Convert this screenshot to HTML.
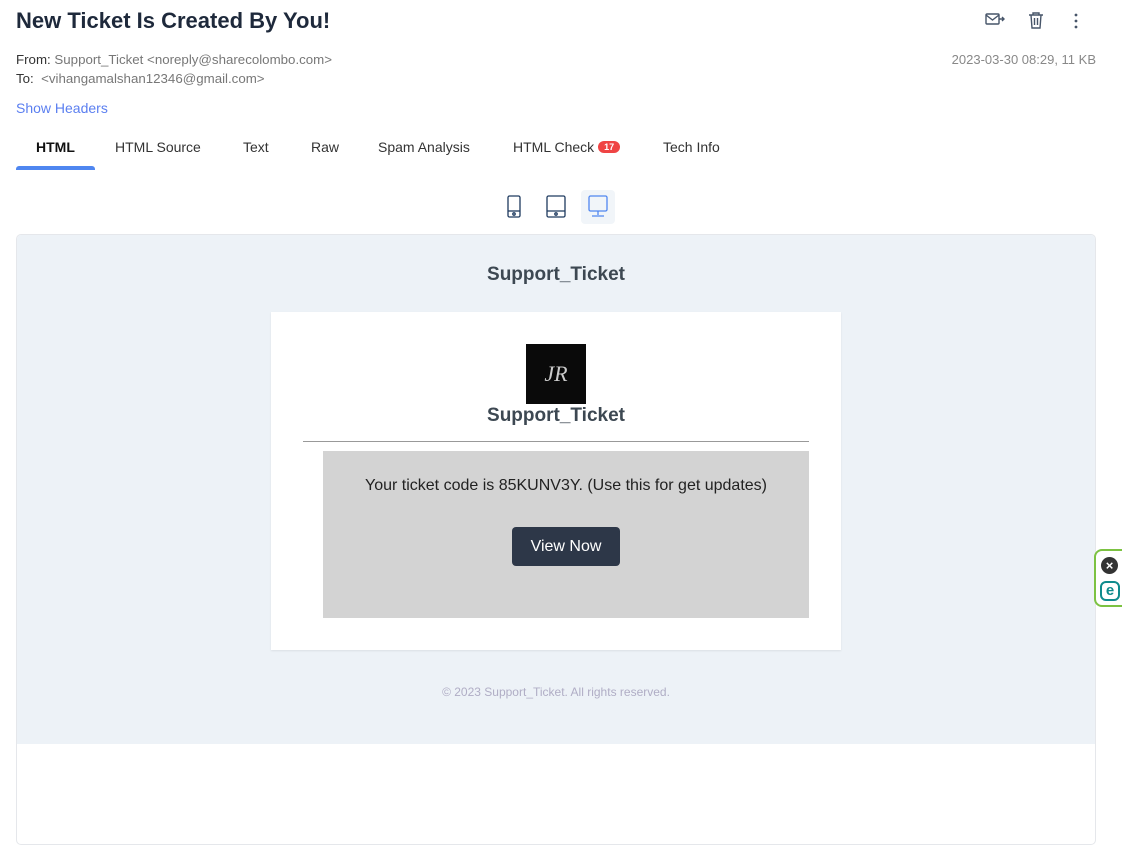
<!DOCTYPE html>
<html><head><meta charset="utf-8"><style>
*{box-sizing:border-box;margin:0;padding:0}
body{width:1122px;height:855px;background:#fff;font-family:"Liberation Sans",sans-serif;position:relative;overflow:hidden;color:#1f2937}
.abs{position:absolute}
h1{position:absolute;left:16px;top:8px;font-size:22px;font-weight:bold;color:#1e293b}
.meta{font-size:13.3px;color:#333}
.meta span{color:#777}
.tab{position:absolute;top:139px;font-size:14px;color:#333}
.hd{font-size:19px;font-weight:bold;color:#3d4852;font-family:"Liberation Sans",sans-serif}
</style></head><body>
<h1>New Ticket Is Created By You!</h1>
<div class="abs meta" style="left:16px;top:52px">From: <span>Support_Ticket &lt;noreply@sharecolombo.com&gt;</span></div>
<div class="abs meta" style="left:16px;top:71px">To:&nbsp; <span>&lt;vihangamalshan12346@gmail.com&gt;</span></div>
<div class="abs" style="right:26px;top:52px;font-size:13px;color:#888">2023-03-30 08:29, 11 KB</div>
<svg class="abs" style="left:985px;top:12px" width="20" height="16" viewBox="0 0 20 16" fill="none" stroke="#475569" stroke-width="1.4"><rect x="1" y="2" width="13" height="10" rx="1"/><path d="M1 3l6.5 5 6.5-5M14 7h5M17 5l2 2-2 2"/></svg>
<svg class="abs" style="left:1028px;top:11px" width="16" height="18" viewBox="0 0 16 18" fill="none" stroke="#475569" stroke-width="1.4"><path d="M1 4h14M5 4V2h6v2M3 4l1 13h8l1-13M6.5 7v7M9.5 7v7"/></svg>
<svg class="abs" style="left:1073px;top:13px" width="6" height="16"><circle cx="3" cy="2" r="1.4" fill="#475569"/><circle cx="3" cy="8" r="1.4" fill="#475569"/><circle cx="3" cy="14" r="1.4" fill="#475569"/></svg>
<div class="abs" style="left:16px;top:100px;font-size:14px;color:#5b7ff0">Show Headers</div>
<div class="tab" style="left:36px;font-weight:bold;color:#111">HTML</div>
<div class="abs" style="left:16px;top:166px;width:79px;height:4px;background:#4f86f0;border-radius:3px 3px 0 0"></div>
<div class="tab" style="left:115px">HTML Source</div>
<div class="tab" style="left:243px">Text</div>
<div class="tab" style="left:311px">Raw</div>
<div class="tab" style="left:378px">Spam Analysis</div>
<div class="tab" style="left:513px">HTML Check <span style="display:inline-block;background:#ef4444;color:#fff;font-size:9px;font-weight:bold;border-radius:7px;padding:1px 6px;vertical-align:2px">17</span></div>
<div class="tab" style="left:663px">Tech Info</div>
<svg class="abs" style="left:507px;top:195px" width="14" height="24" fill="none" stroke="#1e3a5f" stroke-width="1.3"><rect x="1" y="1" width="12" height="21" rx="1.5"/><path d="M1 16h12"/><circle cx="7" cy="19" r="1.2"/></svg>
<svg class="abs" style="left:546px;top:195px" width="20" height="24" fill="none" stroke="#1e3a5f" stroke-width="1.3"><rect x="1" y="1" width="18" height="21" rx="1.5"/><path d="M1 16h18"/><circle cx="10" cy="19" r="1.2"/></svg>
<div class="abs" style="left:581px;top:190px;width:34px;height:34px;background:#f1f5f9;border-radius:4px"></div>
<svg class="abs" style="left:587px;top:195px" width="22" height="24" fill="none" stroke="#4f86f0" stroke-width="1.3"><rect x="2" y="1" width="18" height="15" rx="1.5"/><path d="M11 16v4M5 21h12"/></svg>
<div class="abs" style="left:16px;top:234px;width:1080px;height:611px;border:1px solid #e5e7eb;border-radius:5px;overflow:hidden">
 <div style="height:509px;background:#edf2f7;position:relative">
  <div class="abs hd" style="left:0;width:100%;top:29px;text-align:center">Support_Ticket</div>
  <div class="abs" style="left:254px;top:77px;width:570px;height:338px;background:#fff;box-shadow:0 1px 2px rgba(0,0,0,.08)">
   <div class="abs" style="left:255px;top:32px;width:60px;height:60px;background:#0a0a0a;color:#ccc;font-family:'Liberation Serif',serif;font-style:italic;font-size:22px;text-align:center;line-height:60px">JR</div>
   <div class="abs hd" style="left:0;width:100%;top:93px;text-align:center">Support_Ticket</div>
   <div class="abs" style="left:32px;top:129px;width:506px;height:1px;background:#999"></div>
   <div class="abs" style="left:52px;top:139px;width:486px;height:167px;background:#d3d3d3">
    <div style="text-align:center;margin-top:26px;font-size:16px;color:#222">Your ticket code is 85KUNV3Y. (Use this for get updates)</div>
    <div class="abs" style="left:189px;top:76px;width:108px;height:39px;background:#2d3748;border-radius:4px;color:#fff;font-size:16px;text-align:center;line-height:39px">View Now</div>
   </div>
  </div>
  <div class="abs" style="left:0;width:100%;top:450px;text-align:center;font-size:12px;color:#b0adc5">© 2023 Support_Ticket. All rights reserved.</div>
 </div>
</div>
<div class="abs" style="left:1094px;top:549px;width:40px;height:58px;border:2px solid #7cc242;border-radius:8px;background:#fff"></div>
<div class="abs" style="left:1101px;top:557px;width:17px;height:17px;border-radius:50%;background:#333;color:#fff;font-size:13px;font-weight:bold;text-align:center;line-height:17px">×</div>
<div class="abs" style="left:1100px;top:581px;width:20px;height:20px;border:2px solid #0f8b8d;border-radius:6px;color:#0f8b8d;font-size:15px;font-weight:bold;text-align:center;line-height:16px">e</div>
</body></html>
